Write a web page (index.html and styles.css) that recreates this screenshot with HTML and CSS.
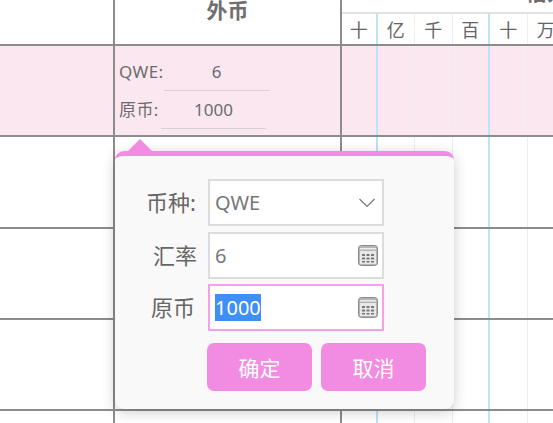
FILE: index.html
```html
<!DOCTYPE html>
<html lang="zh-CN">
<head>
<meta charset="utf-8">
<title>外币</title>
<link rel="stylesheet" href="styles.css">
</head>
<body>
<div class="sheet">
  <div class="row head">
    <div class="c0"></div>
    <div class="c1 title">外币</div>
    <div class="c2">
      <div class="group"><span class="group-text">借方</span></div>
      <div class="digits">
        <span class="d blue">十</span><span class="d">亿</span><span class="d">千</span><span class="d blue">百</span><span class="d">十</span><span class="d">万</span>
      </div>
    </div>
  </div>
  <div class="row body active">
    <div class="c0"></div>
    <div class="c1 info">
      <div class="line"><span class="k k1">QWE:</span><span class="v">6</span></div>
      <div class="line"><span class="k k2">原币:</span><span class="v">1000</span></div>
    </div>
    <div class="c2 cells"><i class="blue"></i><i></i><i></i><i class="blue"></i><i></i><i></i></div>
  </div>
  <div class="row body">
    <div class="c0"></div><div class="c1"></div>
    <div class="c2 cells"><i class="blue"></i><i></i><i></i><i class="blue"></i><i></i><i></i></div>
  </div>
  <div class="row body">
    <div class="c0"></div><div class="c1"></div>
    <div class="c2 cells"><i class="blue"></i><i></i><i></i><i class="blue"></i><i></i><i></i></div>
  </div>
  <div class="row body">
    <div class="c0"></div><div class="c1"></div>
    <div class="c2 cells"><i class="blue"></i><i></i><i></i><i class="blue"></i><i></i><i></i></div>
  </div>
  <div class="row body last">
    <div class="c0"></div><div class="c1"></div>
    <div class="c2 cells"><i class="blue"></i><i></i><i></i><i class="blue"></i><i></i><i></i></div>
  </div>
  <div class="popup">
    <div class="arrow"></div>
    <div class="field">
      <label class="lab lab-colon">币种:</label>
      <div class="box"><span class="val">QWE</span>
        <svg class="chev" width="18" height="10" viewBox="0 0 18 10"><path d="M1.5 1 L9 8.500 L16.500 1" fill="none" stroke="#777" stroke-width="1.200"/></svg>
      </div>
    </div>
    <div class="field">
      <label class="lab">汇率</label>
      <div class="box"><span class="val">6</span>
        <svg class="calc" width="20" height="21" viewBox="0 0 20 21"><rect x="0.500" y="0.500" width="19" height="20" rx="3" fill="#b5b5b5" stroke="#8a8a8a"/><rect x="2" y="6" width="16" height="13" fill="#e8e8e8"/><rect x="2" y="3" width="16" height="1.500" fill="#eee"/><path d="M4 9h3v2H4zM8.500 9h3v2h-3zM13 9h3v2h-3zM4 12.500h3v2H4zM8.500 12.500h3v2h-3zM13 12.500h3v2h-3zM4 16h3v1.500H4zM8.500 16h3v1.500h-3zM13 16h3v1.500h-3z" fill="#777"/></svg>
      </div>
    </div>
    <div class="field">
      <label class="lab lab-tight">原币</label>
      <div class="box focus"><span class="val sel">1000</span>
        <svg class="calc" width="20" height="21" viewBox="0 0 20 21"><rect x="0.500" y="0.500" width="19" height="20" rx="3" fill="#b5b5b5" stroke="#8a8a8a"/><rect x="2" y="6" width="16" height="13" fill="#e8e8e8"/><rect x="2" y="3" width="16" height="1.500" fill="#eee"/><path d="M4 9h3v2H4zM8.500 9h3v2h-3zM13 9h3v2h-3zM4 12.500h3v2H4zM8.500 12.500h3v2h-3zM13 12.500h3v2h-3zM4 16h3v1.500H4zM8.500 16h3v1.500h-3zM13 16h3v1.500h-3z" fill="#777"/></svg>
      </div>
    </div>
    <div class="actions">
      <button class="btn">确定</button>
      <button class="btn">取消</button>
    </div>
  </div>
</div>
</body>
</html>
```
FILE: styles.css
```css
* { box-sizing: border-box; }
html, body { margin: 0; padding: 0; background: #fff; }
body { font-family: "Noto Sans", "Noto Sans CJK SC", sans-serif; color: #666; }
.sheet { position: relative; width: 553px; height: 423px; overflow: hidden; }
.row { display: flex; border-bottom: 2px solid #8c8c8c; }
.row.head { height: 46px; }
.row.body { height: 91.250px; }
.row.last { border-bottom: 0; }
.row.active { background: #fbe7ef; }
.c0 { width: 115px; flex: none; border-right: 2px solid #8c8c8c; }
.c1 { width: 227px; flex: none; border-right: 2px solid #8c8c8c; }
.c2 { flex: 1; min-width: 0; overflow: hidden; }
.title { font-size: 21px; font-weight: 700; line-height: 21px; text-align: center; color: #6e6e6e; }
.group { height: 14px; border-bottom: 2px solid #e2e2e2; overflow: hidden; padding-left: 184px; }
.group-text { display: block; margin-top: -18px; font-size: 21px; font-weight: 700; line-height: 21px; color: #6e6e6e; white-space: nowrap; }
.digits { display: flex; height: 30px; }
.d { width: 37.500px; flex: none; font-size: 18px; line-height: 32px; text-align: center; border-right: 1px solid #eee; }
.d:first-child { width: 35.500px; }
.d.blue { border-right: 2px solid #bde3f8; }
.cells { display: flex; }
.cells i { width: 37.500px; flex: none; border-right: 1px solid #ececec; }
.cells i:first-child { width: 35.500px; }
.cells i.blue { border-right: 2px solid #bde3f8; }
.info { padding: 11px 0 0 4px; font-size: 17px; color: #6c6c6c; }
.line { display: flex; height: 37.500px; align-items: flex-start; }
.k { line-height: 30px; flex: none; letter-spacing: .4px; }
.k1 { width: 45px; }
.k2 { width: 42px; }
.v { height: 34px; line-height: 30px; text-align: center; border-bottom: 1px solid #d8d0d4; width: 105px; }
.popup { position: absolute; left: 115px; top: 151px; width: 339px; height: 258px; background: #f9f9f9; border-top: 5px solid #f28ce3; border-radius: 9px; box-shadow: 0 3px 14px rgba(0,0,0,.2); padding: 23px 0 0 93px; }
.arrow { position: absolute; left: 13px; top: -17px; width: 0; height: 0; border-left: 12px solid transparent; border-right: 12px solid transparent; border-bottom: 12px solid #f28ce3; }
.field { position: relative; display: flex; margin-bottom: 5.500px; }
.lab { position: absolute; right: 100%; top: 0; margin-right: 11px; font-size: 22px; line-height: 46px; text-align: right; color: #666; white-space: nowrap; }
.lab-colon { margin-right: 12px; }
.lab-tight { margin-right: 13px; }
.box { width: 176px; height: 47px; background: #fff; border: 2px solid #dcdcdc; display: flex; align-items: center; justify-content: space-between; padding: 0 2px 0 5px; font-size: 20px; color: #777; }
.box.focus { border-color: #f7a0ea; }
.val { line-height: 27px; }
.sel { background: #3f8ff7; color: #fff; }
.chev { margin-right: 4px; }
.calc { flex: none; margin-right: 2px; }
.actions { display: flex; gap: 9px; margin-top: 12px; margin-left: -1px; }
.btn { width: 105px; height: 48px; border: 0; border-radius: 7px; background: #f28ce3; color: #fff; font: 400 21px "Noto Sans CJK SC", sans-serif; padding: 0; }
```
